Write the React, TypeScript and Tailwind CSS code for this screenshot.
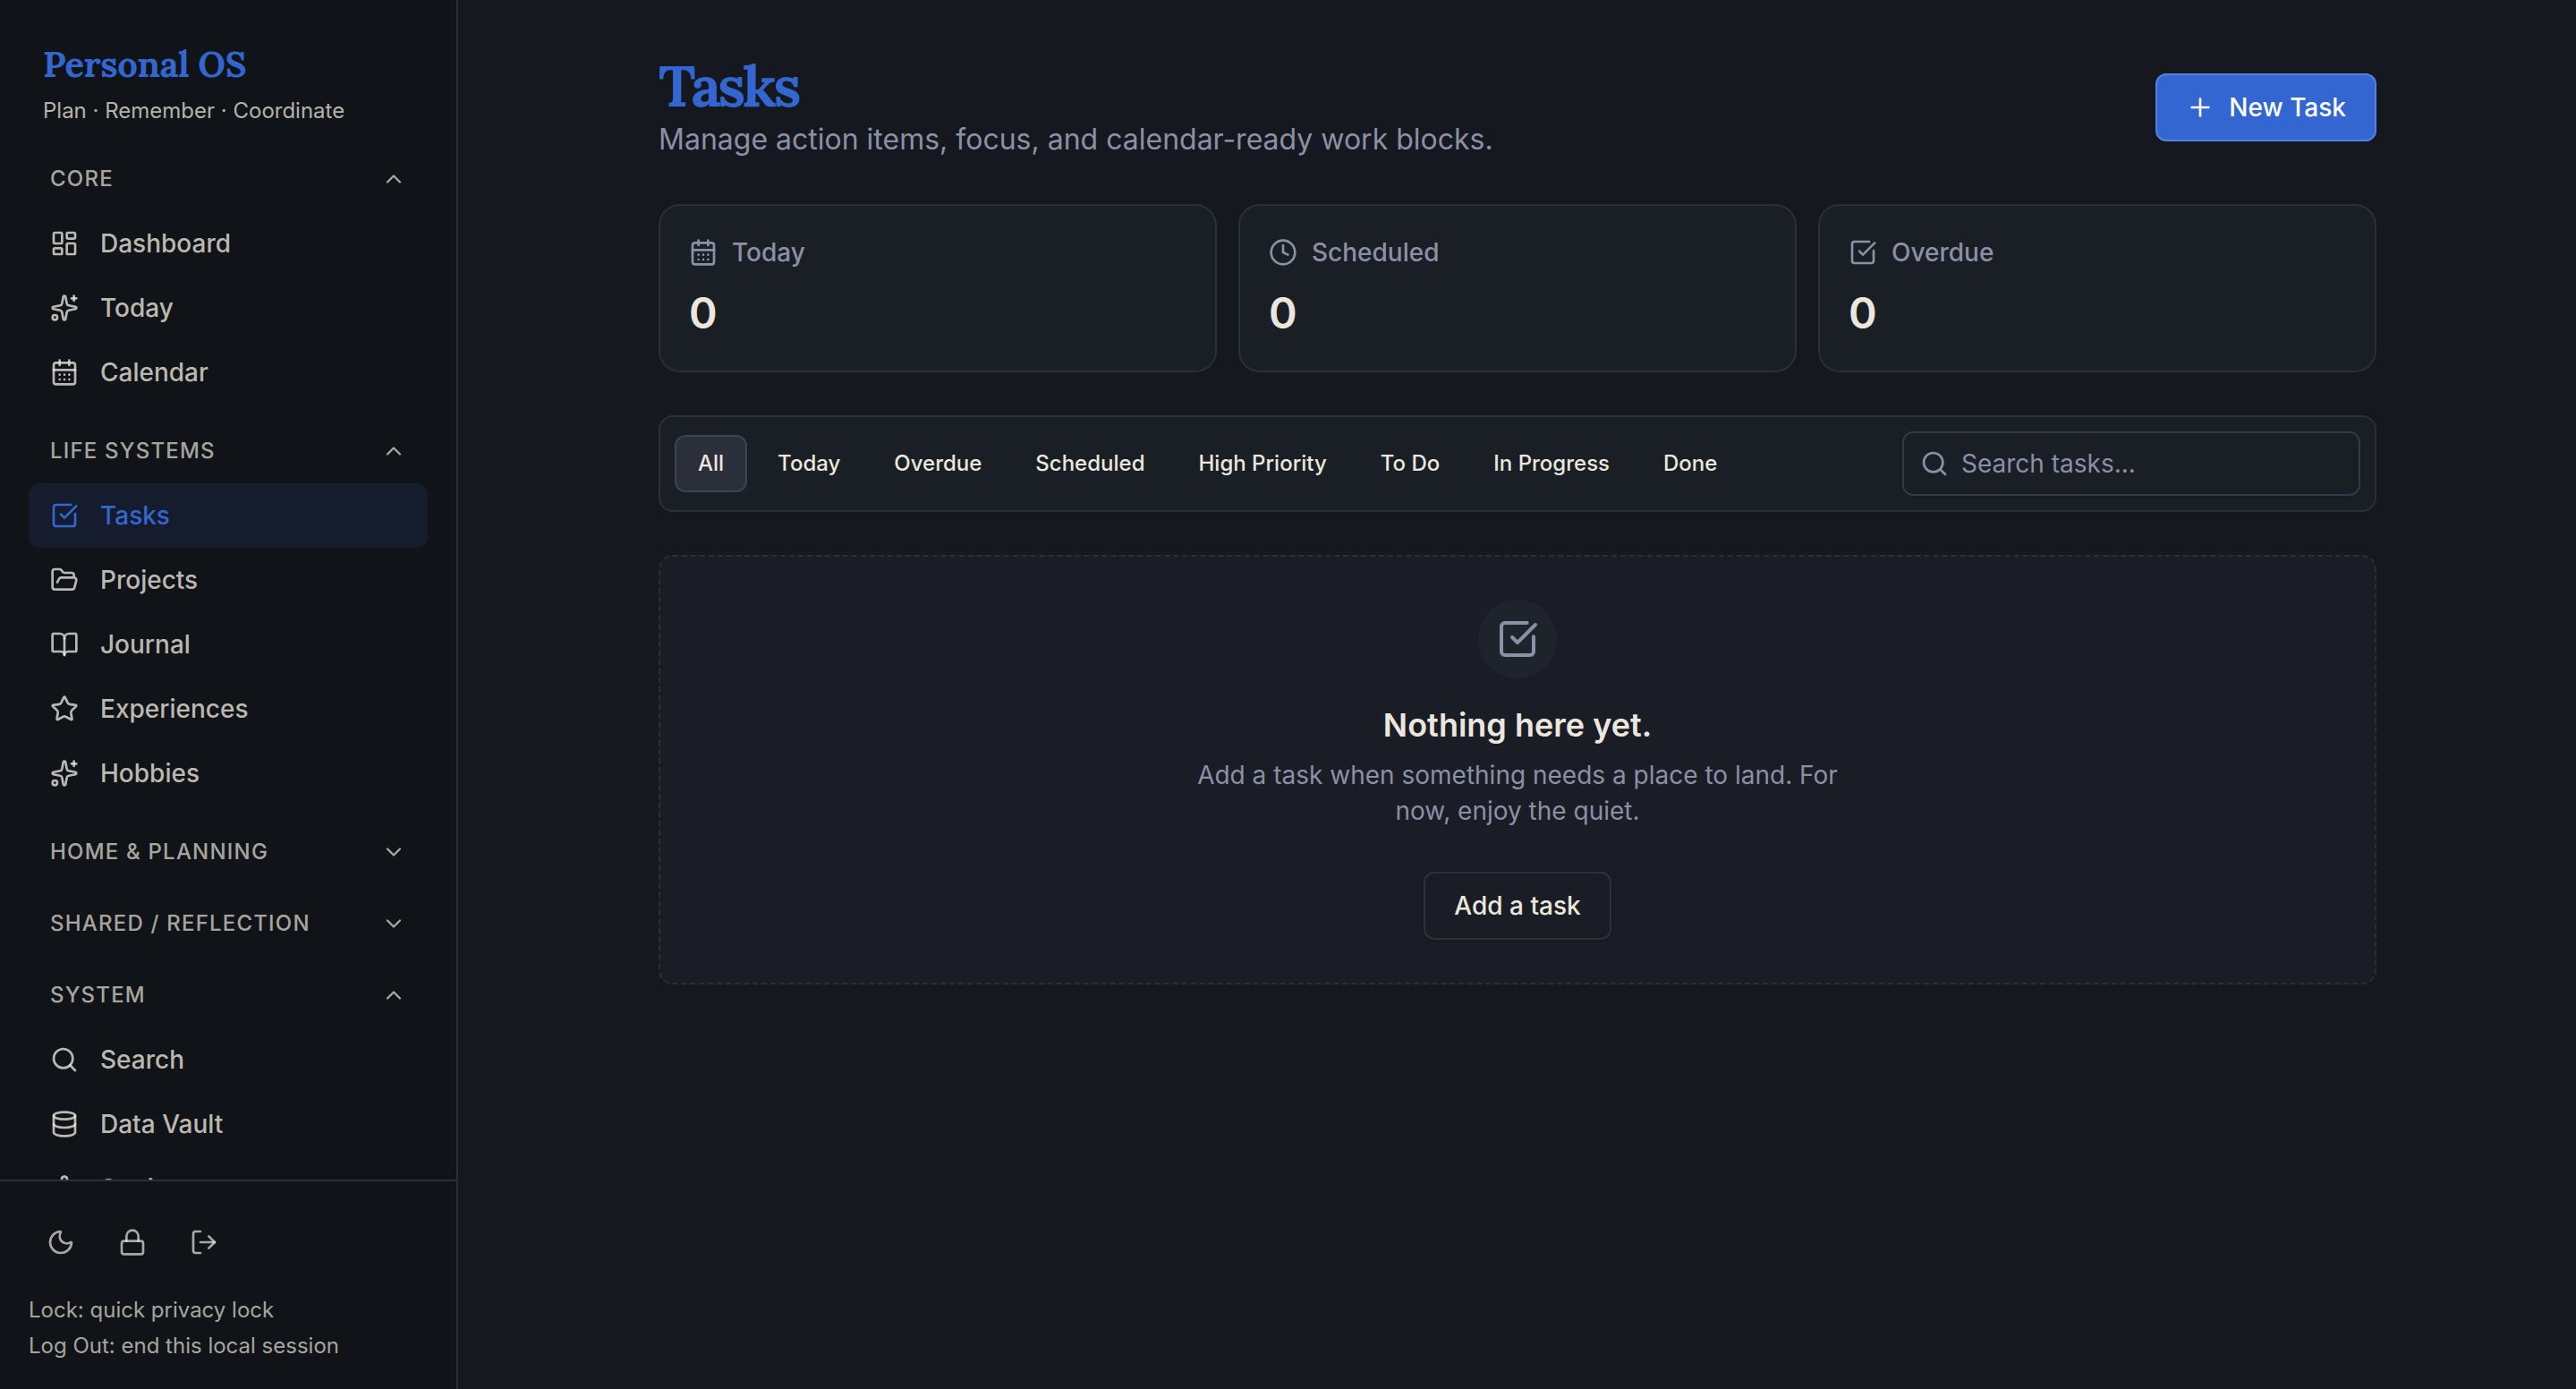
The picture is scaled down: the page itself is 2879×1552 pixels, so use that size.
import { useState } from "react";
import {
    BookOpen,
    CalendarDays,
    ChevronDown,
    ChevronUp,
    Clock,
    Database,
    FolderOpen,
    LayoutDashboard,
    Lock,
    LogOut,
    Moon,
    Plus,
    Search,
    Settings,
    Sparkles,
    SquareCheckBig,
    Star,
    type LucideIcon,
} from "lucide-react";

interface NavItem {
    label: string;
    icon: LucideIcon;
}

interface NavGroup {
    title: string;
    items: NavItem[];
}

const navGroups: NavGroup[] = [
    {
        title: "CORE",
        items: [
            { label: "Dashboard", icon: LayoutDashboard },
            { label: "Today", icon: Sparkles },
            { label: "Calendar", icon: CalendarDays },
        ],
    },
    {
        title: "LIFE SYSTEMS",
        items: [
            { label: "Tasks", icon: SquareCheckBig },
            { label: "Projects", icon: FolderOpen },
            { label: "Journal", icon: BookOpen },
            { label: "Experiences", icon: Star },
            { label: "Hobbies", icon: Sparkles },
        ],
    },
    { title: "HOME & PLANNING", items: [] },
    { title: "SHARED / REFLECTION", items: [] },
    {
        title: "SYSTEM",
        items: [
            { label: "Search", icon: Search },
            { label: "Data Vault", icon: Database },
            { label: "Settings", icon: Settings },
        ],
    },
];

const stats = [
    { label: "Today", value: 0, icon: CalendarDays },
    { label: "Scheduled", value: 0, icon: Clock },
    { label: "Overdue", value: 0, icon: SquareCheckBig },
];

const filters = ["All", "Today", "Overdue", "Scheduled", "High Priority", "To Do", "In Progress", "Done"];

function Sidebar() {
    const [collapsed, setCollapsed] = useState<string[]>(["HOME & PLANNING", "SHARED / REFLECTION"]);
    const [active, setActive] = useState("Tasks");

    const toggle = (title: string) => {
        setCollapsed((prev) =>
            prev.includes(title) ? prev.filter((t) => t !== title) : [...prev, title]
        );
    };

    return (
        <aside className="flex h-full w-[512px] shrink-0 flex-col border-r-2 border-[#2a2f3a] bg-[#101317]">
            <div className="flex h-[168px] shrink-0 flex-col px-12 pt-12">
                <h2 className="font-[Lora,'Liberation_Serif',serif] text-[40px] font-bold leading-[48px] tracking-[-0.01em] text-[#3366d1]">
                    Personal OS
                </h2>
                <p className="mt-2 text-2xl leading-10 text-[#ebe7de]/75">Plan · Remember · Coordinate</p>
            </div>

            <nav className="min-h-0 flex-1 overflow-hidden px-8">
                {navGroups.map((group) => {
                    const isOpen = !collapsed.includes(group.title);
                    const Chevron = isOpen ? ChevronUp : ChevronDown;
                    return (
                        <div key={group.title} className="mb-4">
                            <button
                                onClick={() => toggle(group.title)}
                                className="flex h-16 w-full items-center justify-between px-6 text-2xl font-medium tracking-[0.05em] text-[#ebe7de]/70"
                            >
                                {group.title}
                                <Chevron className="size-7" />
                            </button>
                            {isOpen && (
                                <div className="py-1">
                                    {group.items.map(({ label, icon: Icon }) => (
                                        <button
                                            key={label}
                                            onClick={() => setActive(label)}
                                            className={`flex h-[72px] w-full items-center gap-6 rounded-xl px-6 text-[28px] font-medium ${
                                                active === label
                                                    ? "bg-[#3366d1]/12 text-[#3366d1]"
                                                    : "text-[#ebe7de]/78"
                                            }`}
                                        >
                                            <Icon className="size-8" />
                                            {label}
                                        </button>
                                    ))}
                                </div>
                            )}
                        </div>
                    );
                })}
            </nav>

            <div className="h-[234px] shrink-0 border-t-2 border-[#2a2f3a] px-8 pt-8 text-[#ebe7de]/70">
                <div className="flex gap-2">
                    {[Moon, Lock, LogOut].map((Icon, i) => (
                        <button key={i} className="flex size-[72px] items-center justify-center rounded-xl">
                            <Icon className="size-8" />
                        </button>
                    ))}
                </div>
                <div className="mt-5 text-2xl leading-10">
                    <p>Lock: quick privacy lock</p>
                    <p>Log Out: end this local session</p>
                </div>
            </div>
        </aside>
    );
}

export default function App() {
    const [filter, setFilter] = useState("All");
    const [query, setQuery] = useState("");

    return (
        <div className="flex h-screen overflow-hidden bg-[#15181f] font-[Inter,'Liberation_Sans',sans-serif] text-[#ebe7de]">
            <Sidebar />

            <main className="min-w-0 flex-1 pl-px">
                <div className="mx-auto w-[1920px] pt-16">
                    <header className="flex h-28 items-center justify-between">
                        <div>
                            <h1 className="font-[Lora,'Liberation_Serif',serif] text-[64px] font-bold leading-[72px] tracking-[-0.053em] text-[#3366d1]">
                                Tasks
                            </h1>
                            <p className="text-[32px] leading-[48px] text-[#8b90a5]">
                                Manage action items, focus, and calendar-ready work blocks.
                            </p>
                        </div>
                        <button className="flex h-[76px] items-center gap-4 rounded-xl border-2 border-[#5481e0] bg-[#3366d1] px-8 text-[28px] font-medium text-white">
                            <Plus className="size-8" />
                            New Task
                        </button>
                    </header>

                    <section className="mt-[52px] grid grid-cols-3 gap-6">
                        {stats.map(({ label, value, icon: Icon }) => (
                            <div key={label} className="rounded-3xl border-2 border-[#2a2f3a] bg-[#1a1e25] p-8">
                                <div className="flex items-center gap-4 text-[28px] font-medium leading-10 text-[#8b90a5]">
                                    <Icon className="size-8" />
                                    {label}
                                </div>
                                <div className="mt-4 text-5xl font-semibold leading-[64px]">{value}</div>
                            </div>
                        ))}
                    </section>

                    <section className="mt-12 flex items-center justify-between rounded-2xl border-2 border-[#2a2f3a] bg-[#1a1e25] p-4">
                        <div className="flex gap-2">
                            {filters.map((name) => (
                                <button
                                    key={name}
                                    onClick={() => setFilter(name)}
                                    className={`h-16 rounded-xl border-2 px-6 text-2xl font-medium ${
                                        filter === name
                                            ? "border-[#3c4356] bg-[#2a2f3a]"
                                            : "border-transparent"
                                    }`}
                                >
                                    {name}
                                </button>
                            ))}
                        </div>
                        <label className="flex h-[72px] w-[512px] items-center gap-3.5 rounded-xl border-2 border-[#343a4a] px-[18px] text-[#8b90a5] shadow-sm">
                            <Search className="size-8 shrink-0" />
                            <input
                                value={query}
                                onChange={(e) => setQuery(e.target.value)}
                                placeholder="Search tasks..."
                                className="w-full bg-transparent text-[28px] outline-none placeholder:text-[#8b90a5]"
                            />
                        </label>
                    </section>

                    <section className="mt-12 flex flex-col items-center rounded-2xl border-2 border-dashed border-[#2a2f3a] bg-[#1a1d25] py-12 text-center">
                        <div className="flex size-[88px] items-center justify-center rounded-full bg-[#1f232b] text-[#8b90a5]">
                            <SquareCheckBig className="size-12" />
                        </div>
                        <h3 className="mt-6 text-4xl font-semibold leading-[56px]">Nothing here yet.</h3>
                        <p className="mt-2 w-[768px] text-[28px] leading-10 text-[#8b90a5]">
                            Add a task when something needs a place to land. For now, enjoy the quiet.
                        </p>
                        <button className="mt-12 h-[76px] rounded-xl border-2 border-[#2d313a] px-8 text-[28px] font-medium shadow-sm">
                            Add a task
                        </button>
                    </section>
                </div>
            </main>
        </div>
    );
}
